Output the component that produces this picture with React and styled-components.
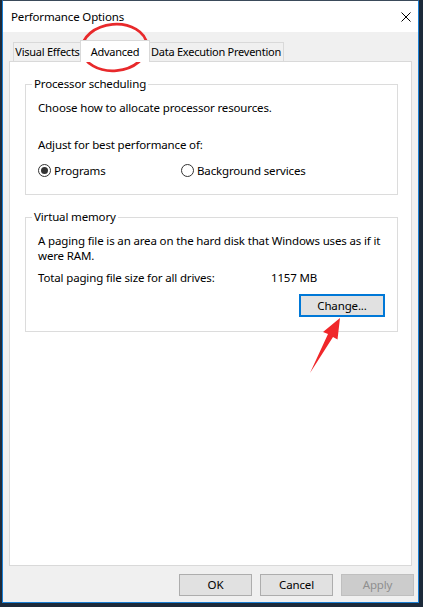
import React from 'react';
import styled, { createGlobalStyle } from 'styled-components';

const GlobalStyle = createGlobalStyle`
  html, body {
    margin: 0;
    padding: 0;
    background: #1d2a3a;
  }
  body {
    width: 423px;
    height: 607px;
    overflow: hidden;
    font-family: "Noto Sans", "Segoe UI", sans-serif;
    font-size: 11.5px;
    letter-spacing: -0.15px;
    color: #000;
  }
`;

const Stage = styled.div`
  position: relative;
  width: 423px;
  height: 607px;
`;

// Dialog frame
const Window = styled.div`
  margin-left: 2px;
  width: 417px;
  height: 603px;
  box-sizing: border-box;
  border: 1px solid #1a7fd4;
  border-top-color: #3a4a5a;
  background: #f0f0f0;
  display: flex;
  flex-direction: column;
`;

const TitleBar = styled.div`
  height: 31px;
  flex: none;
  background: #fff;
  display: flex;
  align-items: center;
  justify-content: space-between;
  padding: 0 7px 0 8px;
`;

const Title = styled.span`
  line-height: 16px;
`;

const CloseIcon = styled.svg`
  width: 10px;
  height: 10px;
  display: block;
`;

const Body = styled.div`
  flex: 1;
  display: flex;
  flex-direction: column;
  padding: 8px 6px 0;
  min-height: 0;
`;

const TabStrip = styled.div`
  height: 21px;
  flex: none;
  display: flex;
  align-items: flex-end;
  padding-left: 4px;
`;

const Tab = styled.div`
  box-sizing: border-box;
  width: ${p => p.$w}px;
  height: ${p => (p.$active ? '22px' : '19px')};
  margin: ${p => (p.$active ? '0 -2px -1px' : '0')};
  background: ${p => (p.$active ? '#fff' : '#f0f0f0')};
  border: 1px solid #d9d9d9;
  border-bottom: none;
  position: relative;
  z-index: ${p => (p.$active ? 1 : 0)};
  display: flex;
  align-items: center;
  justify-content: center;
  white-space: nowrap;
  font-size: 11px;
  letter-spacing: -0.25px;
  line-height: 16px;
`;

const Pane = styled.div`
  flex: 1;
  background: #fff;
  border: 1px solid #d9d9d9;
  padding: 14px 13px 0 15px;
  display: flex;
  flex-direction: column;
`;

const Group = styled.fieldset`
  margin: 0 0 ${p => p.$gap || 0}px;
  padding: 8px 12px ${p => p.$bottom}px;
  border: 1px solid #dcdcdc;
  min-width: 0;
`;

const Legend = styled.legend`
  margin-left: -6px;
  padding: 0 2px;
  line-height: 16px;
`;

const Line = styled.div`
  line-height: 15px;
  margin-top: ${p => p.$top || 0}px;
`;

const RadioRow = styled.div`
  display: grid;
  grid-template-columns: 143px auto;
  margin-top: 11px;
  line-height: 15px;
`;

const RadioLabel = styled.label`
  display: flex;
  align-items: center;
  gap: 3px;
`;

const RadioDot = styled.span`
  width: 13px;
  height: 13px;
  box-sizing: border-box;
  border-radius: 50%;
  border: 1px solid #333;
  background: #fff;
  display: flex;
  align-items: center;
  justify-content: center;
  &::after {
    content: '';
    width: 7px;
    height: 7px;
    border-radius: 50%;
    background: ${p => (p.$checked ? '#333' : 'transparent')};
  }
`;

const SizeRow = styled.div`
  display: grid;
  grid-template-columns: 233px auto;
  line-height: 15px;
  margin-top: 7px;
`;

const ButtonRight = styled.div`
  display: flex;
  justify-content: flex-end;
  margin-top: 9px;
`;

const Button = styled.div`
  box-sizing: border-box;
  width: ${p => p.$w || 73}px;
  height: ${p => p.$h || 22}px;
  display: flex;
  align-items: center;
  justify-content: center;
  background: ${p => (p.$disabled ? '#cccccc' : '#e1e1e1')};
  color: ${p => (p.$disabled ? '#8f8f8f' : '#000')};
  border: ${p => (p.$focus ? '2px solid #0078d7' : `1px solid ${p.$disabled ? '#bfbfbf' : '#adadad'}`)};
  line-height: 16px;
`;

const Footer = styled.div`
  flex: none;
  display: flex;
  justify-content: flex-end;
  gap: 8px;
  padding: 8px 0 6px;
  margin-right: -2px;
`;

const Annotations = styled.svg`
  position: absolute;
  left: 0;
  top: 0;
  width: 423px;
  height: 607px;
  pointer-events: none;
`;

const App = () => {
  return (
    <Stage>
      <GlobalStyle />
      <Window>
        <TitleBar>
          <Title>Performance Options</Title>
          <CloseIcon viewBox="0 0 10 10">
            <path d="M0.5 0.5 L9.5 9.5 M9.5 0.5 L0.5 9.5" stroke="#000" strokeWidth="1" />
          </CloseIcon>
        </TitleBar>
        <Body>
          <TabStrip>
            <Tab $w={69}>Visual Effects</Tab>
            <Tab $w={70} $active>Advanced</Tab>
            <Tab $w={136}>Data Execution Prevention</Tab>
          </TabStrip>
          <Pane>
            <Group $bottom={16} $gap={14}>
              <Legend>Processor scheduling</Legend>
              <Line>Choose how to allocate processor resources.</Line>
              <Line $top={22}>Adjust for best performance of:</Line>
              <RadioRow>
                <RadioLabel><RadioDot $checked />Programs</RadioLabel>
                <RadioLabel><RadioDot />Background services</RadioLabel>
              </RadioRow>
            </Group>
            <Group $bottom={14}>
              <Legend>Virtual memory</Legend>
              <Line>A paging file is an area on the hard disk that Windows uses as if it were RAM.</Line>
              <SizeRow>
                <span>Total paging file size for all drives:</span>
                <span>1157 MB</span>
              </SizeRow>
              <ButtonRight>
                <Button $w={86} $h={23} $focus>Change...</Button>
              </ButtonRight>
            </Group>
          </Pane>
          <Footer>
            <Button>OK</Button>
            <Button>Cancel</Button>
            <Button $disabled>Apply</Button>
          </Footer>
        </Body>
      </Window>
      <Annotations viewBox="0 0 423 607">
        <ellipse cx="114.5" cy="47.5" rx="32.5" ry="23.2" transform="rotate(-5 114.5 47.5)" fill="none" stroke="#e8292b" strokeWidth="2.8" />
        <polygon points="340,318 337.5,339.5 333,337 310,373 328,334 323,332" fill="#f0272a" />
      </Annotations>
    </Stage>
  );
};

export default App;
